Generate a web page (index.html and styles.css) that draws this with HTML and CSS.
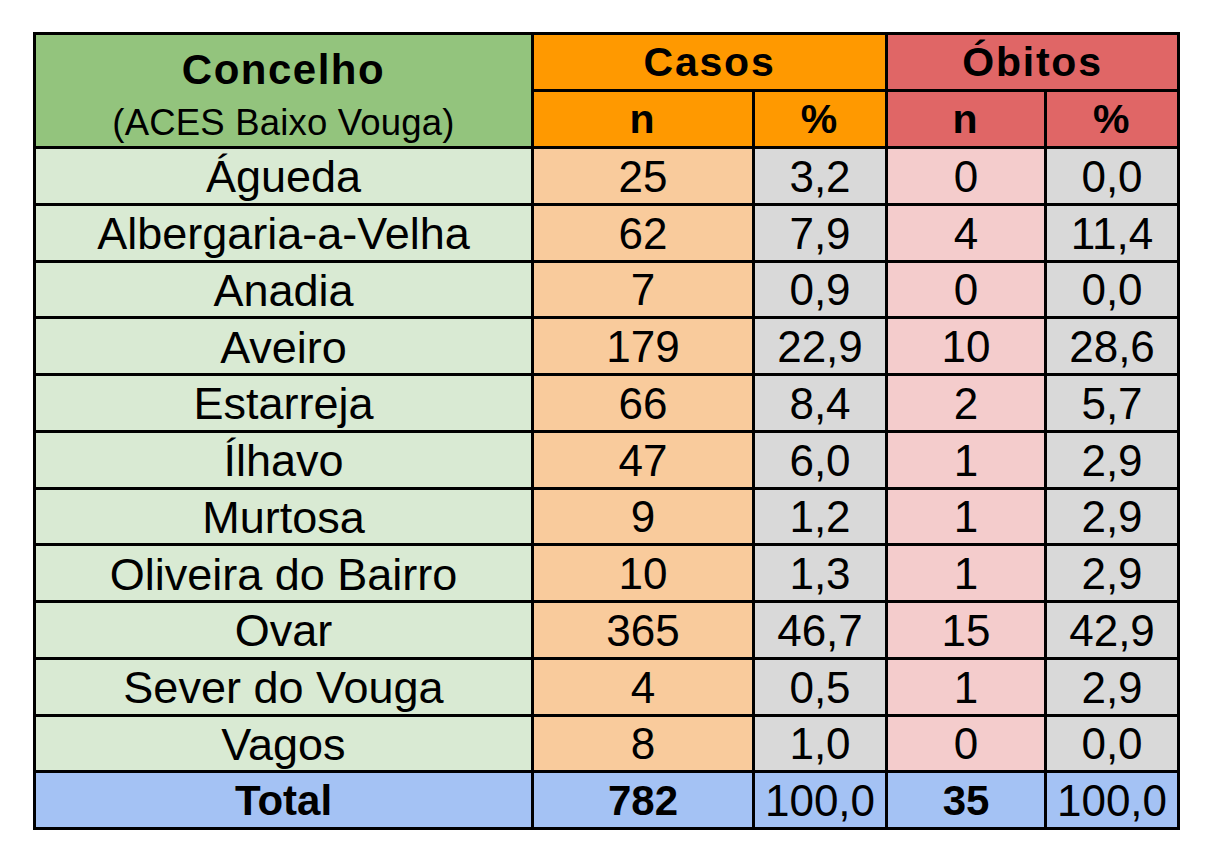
FILE: index.html
```html
<!DOCTYPE html>
<html lang="pt">
<head>
<meta charset="utf-8">
<title>Casos e Óbitos — ACES Baixo Vouga</title>
<link rel="stylesheet" href="styles.css">
</head>
<body>
<table class="tbl">
  <colgroup>
    <col class="c-name">
    <col class="c-cn">
    <col class="c-cp">
    <col class="c-on">
    <col class="c-op">
  </colgroup>
  <thead>
    <tr class="hrow">
      <th rowspan="2" class="h-name">
        <div class="h-title">Concelho</div>
        <div class="h-sub">(ACES Baixo Vouga)</div>
      </th>
      <th colspan="2" class="h-casos">Casos</th>
      <th colspan="2" class="h-obitos">Óbitos</th>
    </tr>
    <tr class="hrow">
      <th class="h-casos">n</th>
      <th class="h-casos">%</th>
      <th class="h-obitos">n</th>
      <th class="h-obitos">%</th>
    </tr>
  </thead>
  <tbody>
    <tr><td class="name">Águeda</td><td class="cn">25</td><td class="pc">3,2</td><td class="on">0</td><td class="pc">0,0</td></tr>
    <tr><td class="name">Albergaria-a-Velha</td><td class="cn">62</td><td class="pc">7,9</td><td class="on">4</td><td class="pc">11,4</td></tr>
    <tr><td class="name">Anadia</td><td class="cn">7</td><td class="pc">0,9</td><td class="on">0</td><td class="pc">0,0</td></tr>
    <tr><td class="name">Aveiro</td><td class="cn">179</td><td class="pc">22,9</td><td class="on">10</td><td class="pc">28,6</td></tr>
    <tr><td class="name">Estarreja</td><td class="cn">66</td><td class="pc">8,4</td><td class="on">2</td><td class="pc">5,7</td></tr>
    <tr><td class="name">Ílhavo</td><td class="cn">47</td><td class="pc">6,0</td><td class="on">1</td><td class="pc">2,9</td></tr>
    <tr><td class="name">Murtosa</td><td class="cn">9</td><td class="pc">1,2</td><td class="on">1</td><td class="pc">2,9</td></tr>
    <tr><td class="name">Oliveira do Bairro</td><td class="cn">10</td><td class="pc">1,3</td><td class="on">1</td><td class="pc">2,9</td></tr>
    <tr><td class="name">Ovar</td><td class="cn">365</td><td class="pc">46,7</td><td class="on">15</td><td class="pc">42,9</td></tr>
    <tr><td class="name">Sever do Vouga</td><td class="cn">4</td><td class="pc">0,5</td><td class="on">1</td><td class="pc">2,9</td></tr>
    <tr><td class="name">Vagos</td><td class="cn">8</td><td class="pc">1,0</td><td class="on">0</td><td class="pc">0,0</td></tr>
  </tbody>
  <tfoot>
    <tr class="total"><td class="name-t bold">Total</td><td class="bold">782</td><td>100,0</td><td class="bold">35</td><td>100,0</td></tr>
  </tfoot>
</table>
</body>
</html>
```

FILE: styles.css
```css
html, body {
  margin: 0;
  padding: 0;
  background: #ffffff;
}

body {
  font-family: "Liberation Sans", Arial, sans-serif;
  color: #000;
}

.tbl {
  margin: 32px 0 0 33px;
  border-collapse: collapse;
  table-layout: fixed;
  width: 1147px;
  border: 3px solid #000;
}

.c-name { width: 498px; }
.c-cn { width: 221px; }
.c-cp { width: 133px; }
.c-on { width: 159px; }
.c-op { width: 133px; }

.tbl th,
.tbl td {
  border: 3px solid #000;
  padding: 0;
  text-align: center;
  vertical-align: middle;
  white-space: nowrap;
  overflow: hidden;
}

.hrow { height: 57px; }
.tbl tbody tr,
.tbl tfoot tr { height: 56.75px; }

.tbl th {
  font-weight: bold;
  font-size: 41px;
  letter-spacing: 1.8px;
  line-height: 1;
}

.h-name {
  background: #93c47d;
  vertical-align: top;
}

.h-title {
  font-size: 42px;
  line-height: 64px;
  letter-spacing: 1.5px;
}

.h-sub {
  font-weight: normal;
  font-size: 36.5px;
  letter-spacing: 0.2px;
  line-height: 42px;
}

.h-casos { background: #ff9900; }
.h-obitos { background: #e06666; }

.tbl td {
  font-size: 44px;
  line-height: 1;
  padding-top: 2px;
}

.tbl td.name { font-size: 45px; }

.name { background: #d9ead3; }
.cn { background: #f9cb9c; }
.pc { background: #d9d9d9; }
.on { background: #f4cccc; }

.total td { background: #a4c2f4; }
.total .bold { font-weight: bold; font-size: 42px; }
```
